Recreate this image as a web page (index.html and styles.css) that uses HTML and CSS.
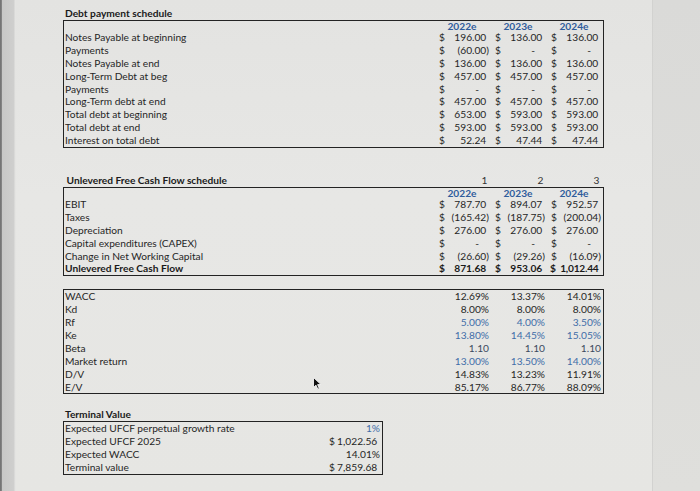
FILE: index.html
```html
<!DOCTYPE html>
<html>
<head>
<meta charset="utf-8">
<link rel="stylesheet" href="styles.css">
</head>
<body>
<div class="screen">
  <div class="edge"></div>
  <div class="sheet">
    <section class="debt">
      <div class="title">Debt payment schedule</div>
      <div class="box wide">
        <div class="row head"><span></span><span class="yr">2022e</span><span class="yr">2023e</span><span class="yr">2024e</span></div>
        <div class="row"><span class="lbl">Notes Payable at beginning</span>
          <span class="acc"><span>$</span><span>196.00<span class="ph">)</span></span></span>
          <span class="acc"><span>$</span><span>136.00<span class="ph">)</span></span></span>
          <span class="acc"><span>$</span><span>136.00<span class="ph">)</span></span></span></div>
        <div class="row"><span class="lbl">Payments</span>
          <span class="acc"><span>$</span><span>(60.00)</span></span>
          <span class="acc"><span>$</span><span class="dash">-</span></span>
          <span class="acc"><span>$</span><span class="dash">-</span></span></div>
        <div class="row"><span class="lbl">Notes Payable at end</span>
          <span class="acc"><span>$</span><span>136.00<span class="ph">)</span></span></span>
          <span class="acc"><span>$</span><span>136.00<span class="ph">)</span></span></span>
          <span class="acc"><span>$</span><span>136.00<span class="ph">)</span></span></span></div>
        <div class="row"><span class="lbl">Long-Term Debt at beg</span>
          <span class="acc"><span>$</span><span>457.00<span class="ph">)</span></span></span>
          <span class="acc"><span>$</span><span>457.00<span class="ph">)</span></span></span>
          <span class="acc"><span>$</span><span>457.00<span class="ph">)</span></span></span></div>
        <div class="row"><span class="lbl">Payments</span>
          <span class="acc"><span>$</span><span class="dash">-</span></span>
          <span class="acc"><span>$</span><span class="dash">-</span></span>
          <span class="acc"><span>$</span><span class="dash">-</span></span></div>
        <div class="row"><span class="lbl">Long-Term debt at end</span>
          <span class="acc"><span>$</span><span>457.00<span class="ph">)</span></span></span>
          <span class="acc"><span>$</span><span>457.00<span class="ph">)</span></span></span>
          <span class="acc"><span>$</span><span>457.00<span class="ph">)</span></span></span></div>
        <div class="row"><span class="lbl">Total debt at beginning</span>
          <span class="acc"><span>$</span><span>653.00<span class="ph">)</span></span></span>
          <span class="acc"><span>$</span><span>593.00<span class="ph">)</span></span></span>
          <span class="acc"><span>$</span><span>593.00<span class="ph">)</span></span></span></div>
        <div class="row"><span class="lbl">Total debt at end</span>
          <span class="acc"><span>$</span><span>593.00<span class="ph">)</span></span></span>
          <span class="acc"><span>$</span><span>593.00<span class="ph">)</span></span></span>
          <span class="acc"><span>$</span><span>593.00<span class="ph">)</span></span></span></div>
        <div class="row"><span class="lbl">Interest on total debt</span>
          <span class="acc"><span>$</span><span>52.24<span class="ph">)</span></span></span>
          <span class="acc"><span>$</span><span>47.44<span class="ph">)</span></span></span>
          <span class="acc"><span>$</span><span>47.44<span class="ph">)</span></span></span></div>
      </div>
    </section>

    <section class="ufcf">
      <div class="row titlerow"><span class="title">Unlevered Free Cash Flow schedule</span><span class="idx">1</span><span class="idx">2</span><span class="idx">3</span></div>
      <div class="box wide">
        <div class="row head"><span></span><span class="yr">2022e</span><span class="yr">2023e</span><span class="yr">2024e</span></div>
        <div class="row"><span class="lbl">EBIT</span>
          <span class="acc"><span>$</span><span>787.70<span class="ph">)</span></span></span>
          <span class="acc"><span>$</span><span>894.07<span class="ph">)</span></span></span>
          <span class="acc"><span>$</span><span>952.57<span class="ph">)</span></span></span></div>
        <div class="row"><span class="lbl">Taxes</span>
          <span class="acc"><span>$</span><span>(165.42)</span></span>
          <span class="acc"><span>$</span><span>(187.75)</span></span>
          <span class="acc"><span>$</span><span>(200.04)</span></span></div>
        <div class="row"><span class="lbl">Depreciation</span>
          <span class="acc"><span>$</span><span>276.00<span class="ph">)</span></span></span>
          <span class="acc"><span>$</span><span>276.00<span class="ph">)</span></span></span>
          <span class="acc"><span>$</span><span>276.00<span class="ph">)</span></span></span></div>
        <div class="row"><span class="lbl">Capital expenditures (CAPEX)</span>
          <span class="acc"><span>$</span><span class="dash">-</span></span>
          <span class="acc"><span>$</span><span class="dash">-</span></span>
          <span class="acc"><span>$</span><span class="dash">-</span></span></div>
        <div class="row"><span class="lbl">Change in Net Working Capital</span>
          <span class="acc"><span>$</span><span>(26.60)</span></span>
          <span class="acc"><span>$</span><span>(29.26)</span></span>
          <span class="acc"><span>$</span><span>(16.09)</span></span></div>
        <div class="row strong"><span class="lbl">Unlevered Free Cash Flow</span>
          <span class="acc"><span>$</span><span>871.68<span class="ph">)</span></span></span>
          <span class="acc"><span>$</span><span>953.06<span class="ph">)</span></span></span>
          <span class="acc snug"><span>$</span><span>1,012.44<span class="ph">)</span></span></span></div>
      </div>
    </section>

    <section class="wacc">
      <div class="box wide">
        <div class="row"><span class="lbl">WACC</span><span class="pct">12.69%</span><span class="pct">13.37%</span><span class="pct">14.01%</span></div>
        <div class="row"><span class="lbl">Kd</span><span class="pct">8.00%</span><span class="pct">8.00%</span><span class="pct">8.00%</span></div>
        <div class="row"><span class="lbl">Rf</span><span class="pct blue">5.00%</span><span class="pct blue">4.00%</span><span class="pct blue">3.50%</span></div>
        <div class="row"><span class="lbl">Ke</span><span class="pct blue">13.80%</span><span class="pct blue">14.45%</span><span class="pct blue">15.05%</span></div>
        <div class="row"><span class="lbl">Beta</span><span class="pct slate">1.10</span><span class="pct slate">1.10</span><span class="pct slate">1.10</span></div>
        <div class="row"><span class="lbl">Market return</span><span class="pct blue">13.00%</span><span class="pct blue">13.50%</span><span class="pct blue">14.00%</span></div>
        <div class="row"><span class="lbl">D/V</span><span class="pct">14.83%</span><span class="pct">13.23%</span><span class="pct">11.91%</span></div>
        <div class="row"><span class="lbl">E/V</span><span class="pct">85.17%</span><span class="pct">86.77%</span><span class="pct">88.09%</span></div>
      </div>
    </section>

    <section class="tv">
      <div class="title">Terminal Value</div>
      <div class="box narrow">
        <div class="row tvrow"><span class="lbl">Expected UFCF perpetual growth rate</span><span class="pct blue">1%</span></div>
        <div class="row tvrow"><span class="lbl">Expected UFCF 2025</span><span class="acc tight"><span>$</span><span>1,022.56<span class="ph">)</span></span></span></div>
        <div class="row tvrow"><span class="lbl">Expected WACC</span><span class="pct">14.01%</span></div>
        <div class="row tvrow"><span class="lbl">Terminal value</span><span class="acc tight"><span>$</span><span>7,859.68<span class="ph">)</span></span></span></div>
      </div>
    </section>

    <svg class="cursor" width="9" height="13" viewBox="0 0 9 13" aria-hidden="true">
      <path d="M0.5 0.5 L0.5 10.5 L3 8.2 L4.8 12.2 L6.3 11.5 L4.6 7.6 L8 7.6 Z" fill="#111" stroke="#f4f4f4" stroke-width="0.9" stroke-linejoin="round"/>
    </svg>
  </div>
  <div class="side"></div>
</div>
</body>
</html>
```

FILE: styles.css
```css
* {
  box-sizing: border-box;
  margin: 0;
  padding: 0;
}

body {
  margin: 0;
  width: 700px;
  height: 491px;
  overflow: hidden;
  background: #dcdcda;
  font-family: Lato, "Open Sans", sans-serif;
  font-size: 10.2px;
  color: #262626;
}

.screen {
  display: flex;
  height: 491px;
}

.edge {
  width: 16px;
  flex: none;
  background: linear-gradient(to right, #6f6f6f 0, #8a8a8a 2px, #c8c8c7 2px, #cfcfce 14px, #e4e4e2 15px, #e4e4e2 16px);
}

.sheet {
  width: 636px;
  flex: none;
  position: relative;
  background: linear-gradient(to bottom, #e3e3e1, #e7e7e5 40%, #e6e6e3);
  padding: 7px 0 0 47px;
}

.side {
  flex: 1;
  background: linear-gradient(to bottom, #dadad8, #dfdfdc);
  border-left: 1px solid #d2d2d0;
}

.title {
  height: 13px;
  line-height: 13px;
  font-weight: 700;
  padding-left: 2px;
  color: #1a1a1a;
  white-space: nowrap;
}

.box {
  border: 1.5px solid #232323;
}

.box.wide {
  width: 541px;
}

.box.narrow {
  width: 320px;
}

.row {
  display: grid;
  grid-template-columns: 370px 56px 56px 56px;
  height: 12.9px;
  line-height: 12.9px;
  white-space: nowrap;
}

.row.head {
  height: 10px;
  line-height: 10px;
}

.row.tvrow {
  grid-template-columns: 261px 56px;
}

.row.strong {
  font-weight: 700;
  color: #1a1a1a;
}

.titlerow {
  height: 13px;
  line-height: 13px;
  margin-left: 1.5px;
}

.lbl {
  padding-left: 1px;
}

.yr {
  text-align: center;
  color: #2f5c9c;
  font-weight: 700;
}

.idx {
  text-align: right;
  padding-right: 3px;
  color: #333;
}

.acc {
  display: flex;
  justify-content: space-between;
  padding: 0 1px 0 5px;
}

.acc.tight {
  padding-left: 4px;
}

.acc.snug {
  padding-left: 4px;
  letter-spacing: -0.25px;
}

.ph {
  visibility: hidden;
}

.dash {
  padding-right: 10px;
}

.pct {
  text-align: right;
  padding-right: 1px;
}

.blue {
  color: #3f6da8;
}

.slate {
  color: #3b4a5e;
}

.ufcf {
  margin-top: 26px;
}

.wacc {
  margin-top: 13px;
}

.tv {
  margin-top: 14px;
}

.cursor {
  position: absolute;
  left: 297px;
  top: 377px;
}
```
